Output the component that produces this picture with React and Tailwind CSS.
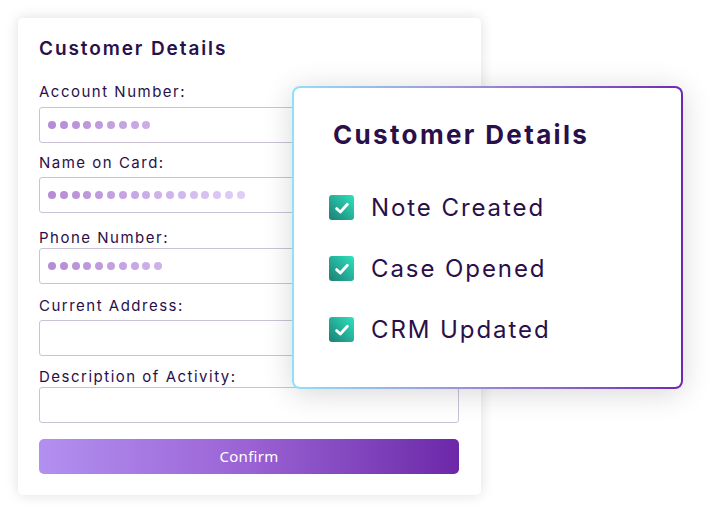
import React from "react";

const INK = "text-[#2a0f4a]";

function lerp(a, b, t) {
  return Math.round(a + (b - a) * t);
}

function Dots({ n }) {
  const from = [0xb6, 0x8c, 0xd6];
  const to = [0xdf, 0xcd, 0xf7];
  return (
    <div className="flex items-center gap-[3.8px] pl-[8px]">
      {Array.from({ length: n }).map((_, i) => {
        const t = n > 1 ? i / 16 : 0;
        const c = `rgb(${lerp(from[0], to[0], t)},${lerp(from[1], to[1], t)},${lerp(from[2], to[2], t)})`;
        return <span key={i} className="block w-[8px] h-[8px] rounded-full" style={{ background: c }} />;
      })}
    </div>
  );
}

function Field({ label, mt, gap, dots, h = "h-[36px]" }) {
  return (
    <div className={mt}>
      <div className={`text-[15px] leading-[20px] tracking-[0.1em] ${INK}`}>{label}</div>
      <div className={`${gap} ${h} w-[420px] rounded-[3px] border border-[#cbc2d6] bg-white flex items-center`}>
        {dots ? <Dots n={dots} /> : null}
      </div>
    </div>
  );
}

function Check() {
  return (
    <div className="w-[25px] h-[25px] rounded-[3px] bg-gradient-to-tr from-[#1b7f74] to-[#2fe3bf] flex items-center justify-center">
      <svg width="18" height="18" viewBox="0 0 18 18" fill="none">
        <path d="M3.6 9.6 L7.3 13 L14.4 5.2" stroke="white" strokeWidth="2.8" strokeLinecap="round" strokeLinejoin="round" />
      </svg>
    </div>
  );
}

export default function App() {
  return (
    <div className="relative w-[728px] h-[513px] bg-white overflow-hidden" style={{ fontFamily: "Inter, 'Noto Sans', sans-serif" }}>
      <div className="ml-[18px] mt-[18px] w-[463px] h-[477px] rounded-[5px] bg-white shadow-[0_0_14px_rgba(0,0,0,0.13)] pt-[19px] pl-[21px]">
        <div className={`text-[19px] leading-[24px] font-semibold tracking-[0.1em] ${INK}`}>Customer Details</div>
        <Field label="Account Number:" mt="mt-[21px]" gap="mt-[5px]" dots={9} />
        <Field label="Name on Card:" mt="mt-[10px]" gap="mt-[4px]" dots={17} />
        <Field label="Phone Number:" mt="mt-[15px]" gap="mt-0" dots={10} />
        <Field label="Current Address:" mt="mt-[12px]" gap="mt-[4px]" />
        <Field label="Description of Activity:" mt="mt-[11px]" gap="mt-0" />
        <div className="mt-[16px] w-[420px] h-[35px] rounded-[5px] bg-gradient-to-r from-[#b290f0] via-[#9a62d4] to-[#6c27a8] flex items-center justify-center text-white text-[15px] tracking-[0.02em]" style={{ fontFamily: "'Noto Sans', sans-serif" }}>
          Confirm
        </div>
      </div>

      <div className="absolute left-[292px] top-[86px] w-[391px] h-[303px] rounded-[8px] p-[2px] bg-gradient-to-r from-[#8fe1f8] via-[#9a86d6] to-[#6e28b0] shadow-[0_4px_30px_rgba(0,0,0,0.16)]">
        <div className="w-full h-full rounded-[6px] bg-white pl-[35px] pt-[31px]">
          <div className={`pl-[4px] text-[26px] leading-[32px] font-bold tracking-[0.09em] ${INK}`}>Customer Details</div>
          <div className="mt-[44px] flex flex-col gap-[36px]">
            {["Note Created", "Case Opened", "CRM Updated"].map((t) => (
              <div key={t} className="flex items-center h-[25px]">
                <Check />
                <span className={`ml-[17px] text-[24px] leading-[25px] tracking-[0.08em] ${INK}`}>{t}</span>
              </div>
            ))}
          </div>
        </div>
      </div>
    </div>
  );
}
